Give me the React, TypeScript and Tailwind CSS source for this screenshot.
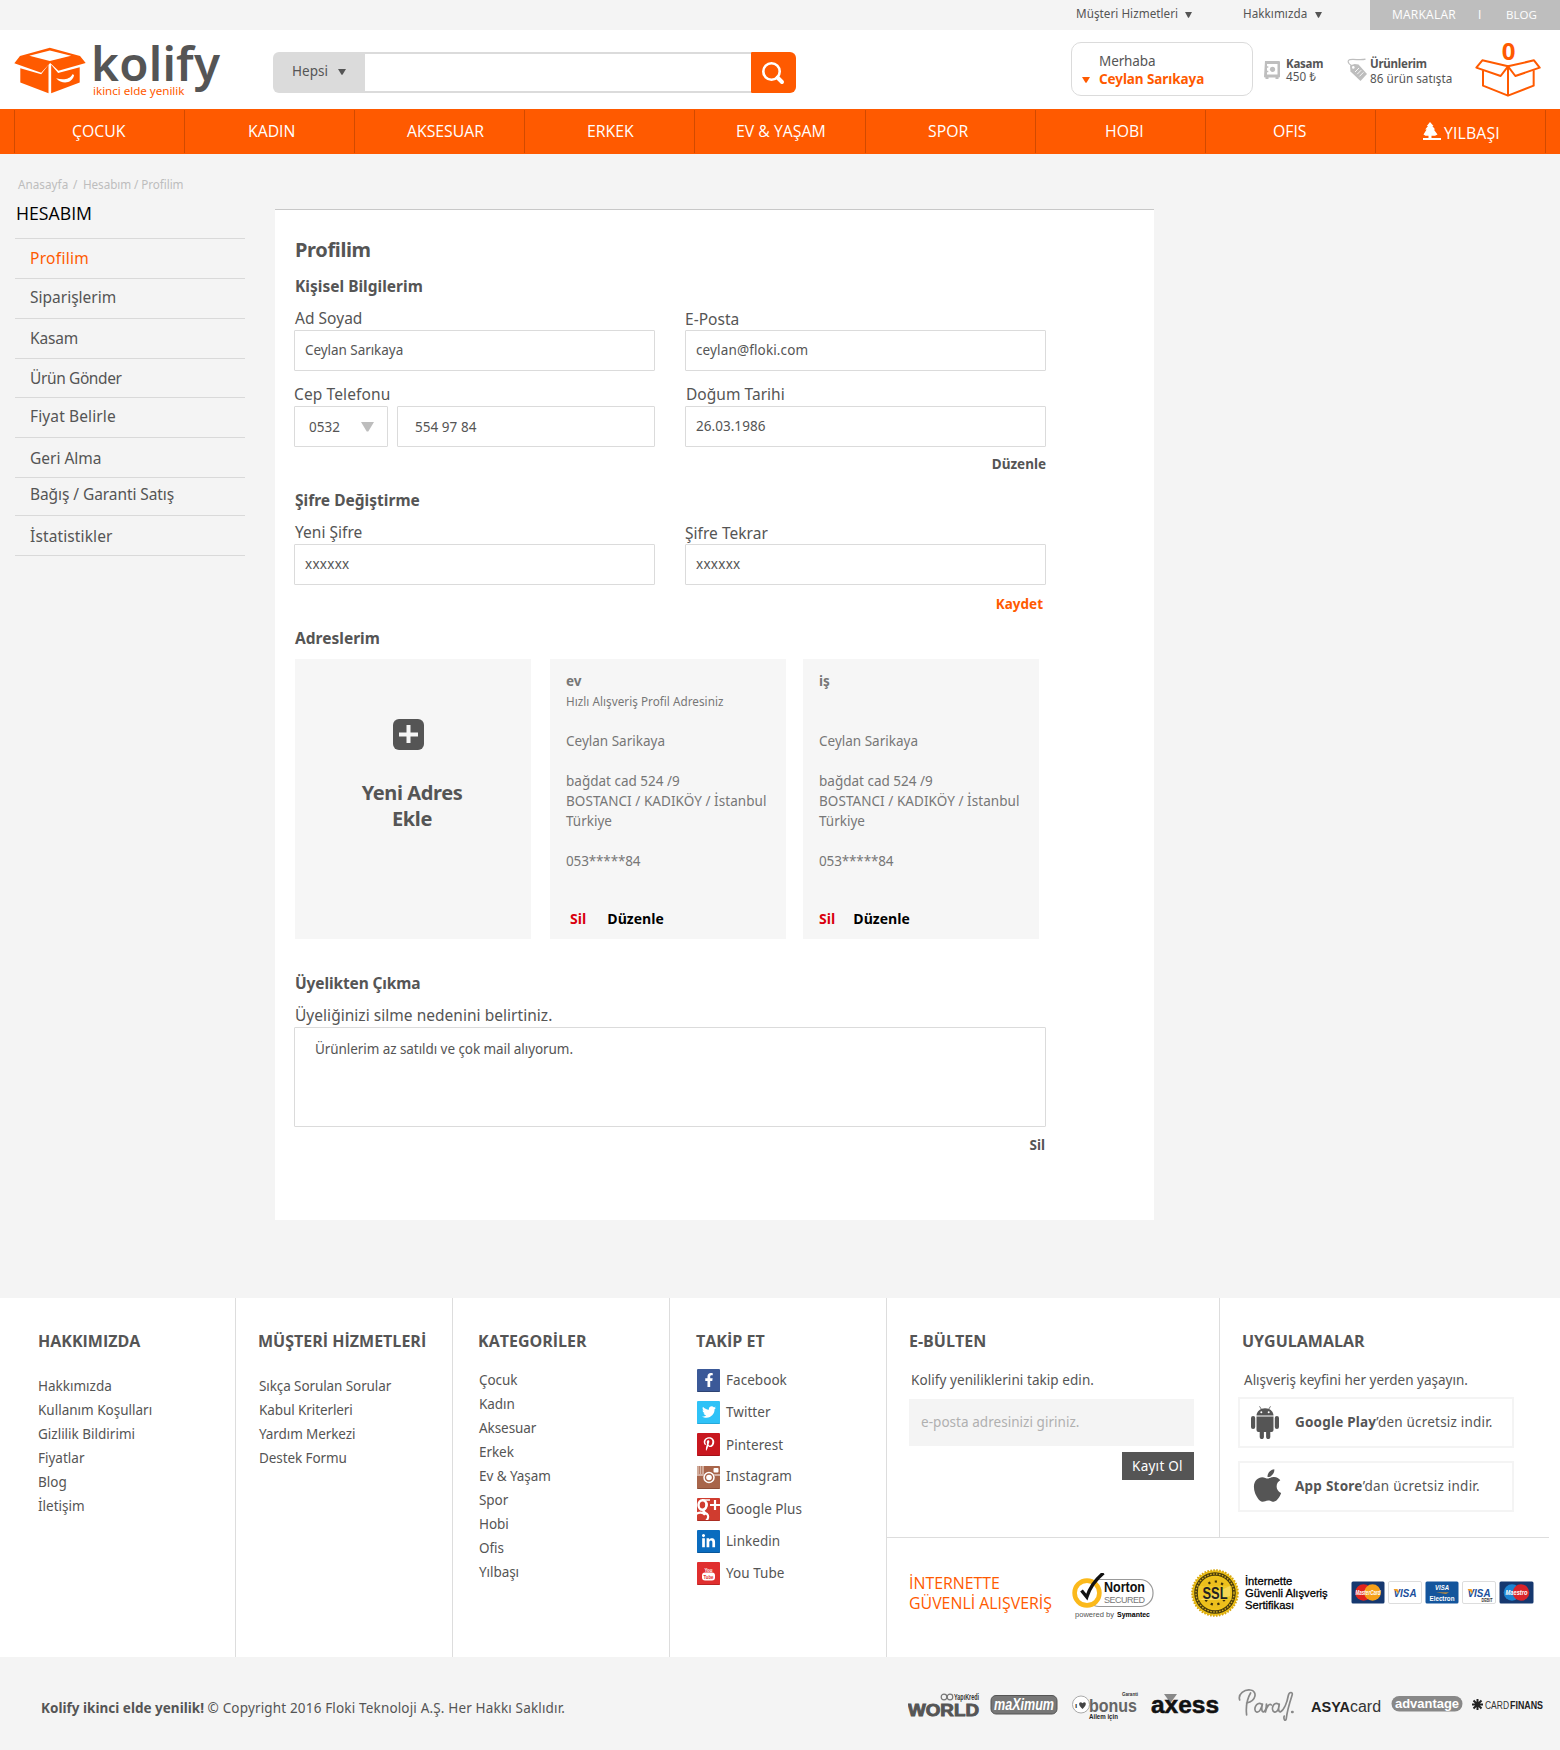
import React from 'react';
import { FaFacebookF, FaTwitter, FaPinterestP, FaLinkedinIn, FaApple } from 'react-icons/fa';

const t12 = "text-[11.7px] tracking-[0.003em]";
const t14 = "text-[13.5px] tracking-[0.003em]";
const t16 = "text-[15.5px] tracking-[0.002em]";
const b16 = "text-[15.5px] font-bold tracking-[0.001em] leading-6";

function Caret({ w, h, className = '' }: { w: number; h: number; className?: string }) {
  return (
    <svg width={w} height={h} viewBox="0 0 10 10" preserveAspectRatio="none" className={className} fill="currentColor">
      <path d="M0 0h10L5.6 9.6h-1.2z" />
    </svg>
  );
}

function LogoBox() {
  return (
    <svg width="72" height="47" viewBox="44 139 217 141">
      <path fill="#ff5a00" d="M45 188 62 166 152 141 243 166 260 187 178 210 153 187 126 216z" />
      <path fill="#fff" d="M90 165 152 149 216 165 152 181z" />
      <path fill="#ff5a00" d="M63 203 126 221 148 192V278L63 246z" />
      <path fill="#ff5a00" d="M156 192 177 217 242 200V246L156 278z" />
      <path fill="#fff" d="M171 233C190 238 212 238 221 220L225 224C220 248 190 254 171 233z" />
    </svg>
  );
}

function BasketIcon() {
  return (
    <svg width="66" height="38" viewBox="1303 178 198 114" fill="none" stroke="#ff5a00" strokeWidth="6" strokeLinejoin="round">
      <path d="M1307 204 1325 182 1402 200 1380 229z" />
      <path d="M1402 200 1480 182 1497 204 1424 229z" />
      <path d="M1327 212V258L1402 288 1479 258V212M1402 200V288" />
    </svg>
  );
}

function SafeIcon() {
  return (
    <svg width="16" height="18" viewBox="0 0 16 18">
      <path fill="#bebebe" d="M1 0h14a1 1 0 0 1 1 1v14.500a1 1 0 0 1-1 1h-.5V18h-3v-1.500h-7V18h-3v-1.500H1a1 1 0 0 1-1-1z" />
      <path fill="#fff" d="M3 3h10.500v10.500H3v-2.200h1.300V9.700H3V6.800h1.300V5.200H3z" />
      <circle cx="8.500" cy="8.300" r="2.600" fill="#bebebe" />
    </svg>
  );
}

function TagIcon() {
  return (
    <svg width="20" height="23" viewBox="0 0 20 23">
      <path d="M18.500 1.200C13 2.600 8 .8 3 1.600 0 2.200.8 5.500 4.500 7.500" fill="none" stroke="#bebebe" strokeWidth="1.200" />
      <path fill="#bebebe" d="M3 7.500 7.500 6l4 .5L20 16l-6.500 7L3.500 13.500z" />
      <circle cx="6.300" cy="9.400" r="1.300" fill="#fff" />
      <path d="m8 14 4-4M10.200 16.200l4-4M12.400 18.400l4-4" stroke="#fff" strokeWidth=".9" />
    </svg>
  );
}

function TreeIcon() {
  return (
    <svg width="18" height="18" viewBox="0 0 18 18" fill="#fff" className="mt-3">
      <path d="M7 0 10.500 4H9.300L12.200 7.600H10.800L14.500 12.500 12 13.800H8.500V16H18v2H0V16H5.500V13.800H2.500L.5 12.500 3.600 7.600H2.200L5 4H3.800z" />
    </svg>
  );
}

const nav = [
  { n: 'ÇOCUK', c: 'w-[170px] pl-[57px]' },
  { n: 'KADIN', c: 'w-[170px] pl-[63px]' },
  { n: 'AKSESUAR', c: 'w-[170px] pl-[52px]' },
  { n: 'ERKEK', c: 'w-[170px] pl-[62px]' },
  { n: 'EV & YAŞAM', c: 'w-[171px] pl-[41px]' },
  { n: 'SPOR', c: 'w-[170px] pl-[62px]' },
  { n: 'HOBI', c: 'w-[170px] pl-[69px]' },
  { n: 'OFIS', c: 'w-[170px] pl-[67px]' },
];

function Header() {
  return (
    <header>
      <div className="flex h-[30px] justify-end">
        <div className={`${t12} flex leading-[27px]`}>
          <span className="w-[101px] whitespace-nowrap">Müşteri Hizmetleri</span>
          <Caret w={7} h={6} className="ml-2 mt-3" />
          <span className="ml-[51px] w-[62px] whitespace-nowrap">Hakkımızda</span>
          <Caret w={7} h={6} className="ml-[10px] mt-3" />
        </div>
        <div className="ml-12 flex w-[190px] bg-[#bebebe] pl-[22px] font-['Open_Sans'] text-[12px] leading-[30px] text-white">
          <span className="w-[86px] tracking-[0.02em]">MARKALAR</span>
          <span className="w-[28px]">I</span>
          <span className="text-[11.5px]">BLOG</span>
        </div>
      </div>
      <div className="flex h-[79px] items-start bg-white pl-[15px]">
        <div className="-ml-px mt-[17px] w-[73px]"><LogoBox /></div>
        <div className="ml-[4px] mt-[9px] w-[182px]">
          <div className="h-[45px] text-[47.5px] font-semibold leading-[48px] tracking-[0.005em]">kolify</div>
          <div className="pl-[2px] text-[11.6px] leading-[13px] tracking-[-0.002em] text-[#ff5a00]">ikinci elde yenilik</div>
        </div>
        <div className="mt-[22px] flex h-[41px]">
          <div className={`${t14} flex w-[92px] rounded-l-[6px] bg-[#dbdbdb] pl-[19px] leading-[39px]`}>
            <span className="w-9">Hepsi</span>
            <Caret w={8} h={6} className="ml-[10px] mt-[17px]" />
          </div>
          <div className="w-[386px] border-y-2 border-[#dbdbdb] bg-white" />
          <div className="w-[45px] rounded-l-[1px] rounded-r-[6px] bg-[#ff5a00] pl-[10px] pt-[9px]">
            <svg width="24" height="24" viewBox="0 0 24 24" fill="none" stroke="#fff">
              <circle cx="10.500" cy="10.500" r="8.200" strokeWidth="2.600" />
              <path d="m16.500 16.500 4.500 4.500" strokeWidth="4" strokeLinecap="round" />
            </svg>
          </div>
        </div>
        <div className="ml-[275px] mt-3 flex h-[54px] w-[182px] rounded-[10px] border border-[#dbdbdb]">
          <Caret w={8} h={6} className="ml-[10px] mt-[34px] text-[#ff5a00]" />
          <div className="ml-[9px] mt-[9px] leading-[18px]">
            <div className="text-[13.5px] tracking-[-0.008em]">Merhaba</div>
            <div className="text-[13.5px] font-bold tracking-[-0.006em] text-[#ff5a00]">Ceylan Sarıkaya</div>
          </div>
        </div>
        <div className="ml-[11px] mt-[31px]"><SafeIcon /></div>
        <div className={`${t12} ml-[6px] mt-[28px] w-[61px] leading-[13px]`}>
          <div className="-mt-px h-[14px] text-[11.5px] font-bold tracking-[-0.02em]">Kasam</div>
          <div className="-mt-px">450 ₺</div>
        </div>
        <div className="mt-7 w-5"><TagIcon /></div>
        <div className={`${t12} ml-[3px] mt-[27px] w-[104px] whitespace-nowrap leading-[14px]`}>
          <div className="text-[11.5px] font-bold tracking-[-0.02em]">Ürünlerim</div>
          <div>86 ürün satışta</div>
        </div>
        <div className="mt-[12px] flex w-[68px] flex-col items-center text-[#ff5a00]">
          <div className="h-[17px] pl-px text-[24px] font-bold leading-[18px]">0</div>
          <BasketIcon />
        </div>
      </div>
      <nav className="flex h-[45px] bg-[#ff5a00] py-px pl-[14px] font-['Open_Sans'] text-[15.8px] leading-[43px] text-white">
        {nav.map((i) => (
          <div key={i.n} className={`${i.c} whitespace-nowrap border-l border-[#d24a00]`}>{i.n}</div>
        ))}
        <div className="flex w-[171px] border-x border-[#d24a00] pl-[47px] leading-[47px]">
          <TreeIcon />
          <span className="ml-[3px] tracking-[0.01em]">YILBAŞI</span>
        </div>
      </nav>
    </header>
  );
}

const side = [
  { n: 'Profilim', c: 'h-[40px] pt-[7px] text-[#ff5a00] tracking-[0.02em]' },
  { n: 'Siparişlerim', c: 'h-[40px] pt-[6px]' },
  { n: 'Kasam', c: 'h-[40px] pt-[7px] tracking-[-0.01em]' },
  { n: 'Ürün Gönder', c: 'h-[39px] pt-[7px] tracking-[-0.025em]' },
  { n: 'Fiyat Belirle', c: 'h-[40px] pt-[6px] tracking-[0.008em]' },
  { n: 'Geri Alma', c: 'h-[40px] pt-[8px]' },
  { n: 'Bağış / Garanti Satış', c: 'h-[38px] pt-[4px] tracking-[-0.005em]' },
  { n: 'İstatistikler', c: 'h-[41px] pt-[8px] border-b tracking-[0.008em]' },
];

function Sidebar() {
  return (
    <aside className="w-[275px] pl-[15px] pt-[22px]">
      <div className={`${t12} flex pl-[3px] leading-4 text-[#bdbdbd]`}>
        <span className="w-[55px]">Anasayfa</span>
        <span className="w-[10px]">/</span>
        <span className="tracking-[-0.006em]">Hesabım / Profilim</span>
      </div>
      <h2 className="ml-px mt-[9px] font-['Open_Sans'] text-[17.7px] leading-6 text-black">HESABIM</h2>
      <ul className="mt-[13px] w-[230px] text-[15.5px]">
        {side.map((s) => (
          <li key={s.n} className={`${s.c} border-t border-[#d9d9d9] pl-[15px] leading-6`}>{s.n}</li>
        ))}
      </ul>
    </aside>
  );
}

function Field({ label, value, labelClass = '', valueClass = 'tracking-[0.003em]' }: { label: string; value: string; labelClass?: string; valueClass?: string }) {
  return (
    <div className="w-[361px]">
      <div className={`${t16} ${labelClass} h-6 leading-6`}>{label}</div>
      <div className={`${valueClass} h-[41px] rounded-[1px] border border-[#dbdbdb] pl-[10px] text-[13.5px] leading-[38px]`}>{value}</div>
    </div>
  );
}

function Address({ title, note, first }: { title: string; note?: string; first?: boolean }) {
  return (
    <div className="h-[280px] w-[236px] whitespace-nowrap bg-[#f6f6f6] pl-4 pt-3 text-[13.5px] leading-5 text-[#777]">
      <div className="font-bold">{title}</div>
      <div className="h-10 text-[11.7px] leading-5 tracking-[0.003em]">{note}</div>
      <div>Ceylan Sarikaya</div>
      <div className="mt-5">bağdat cad 524 /9</div>
      <div className="tracking-[0.004em]">BOSTANCI / KADIKÖY / İstanbul</div>
      <div>Türkiye</div>
      <div className="mt-5 tracking-[-0.01em]">053*****84</div>
      <div className={`${first ? 'gap-[21px] pl-1' : 'gap-[18px]'} mt-[38px] flex font-['Open_Sans'] text-[14px] font-bold text-black`}>
        <span className="text-[#d9000d]">Sil</span>
        <span>Düzenle</span>
      </div>
    </div>
  );
}

function Profile() {
  return (
    <main className="mt-[55px] h-[1011px] w-[879px] border-t border-[#c8c8c8] bg-white pl-[19px] pt-[26px]">
      <h1 className="ml-px text-[20px] font-bold leading-7 tracking-[-0.018em]">Profilim</h1>
      <h3 className={`${b16} ml-px mt-[10px]`}>Kişisel Bilgilerim</h3>
      <div className="mt-2 flex gap-[30px]">
        <Field label="Ad Soyad" value="Ceylan Sarıkaya" labelClass="pl-px" valueClass="tracking-[-0.004em]" />
        <Field label="E-Posta" value="ceylan@floki.com" labelClass="pt-px" valueClass="tracking-[0.01em]" />
      </div>
      <div className="mt-[11px] flex gap-[30px]">
        <div className="w-[361px]">
          <div className="text-[15.5px] leading-6 tracking-[0.008em]">Cep Telefonu</div>
          <div className={`${t14} flex gap-[9px] leading-10`}>
            <div className="flex h-[41px] w-[94px] rounded-[1px] border border-[#dbdbdb] pl-[14px]">
              <span className="w-[52px]">0532</span>
              <Caret w={13} h={10} className="mt-[15px] text-[#bdbdbd]" />
            </div>
            <div className="h-[41px] w-[258px] rounded-[1px] border border-[#dbdbdb] pl-[17px]">554 97 84</div>
          </div>
        </div>
        <Field label="Doğum Tarihi" value="26.03.1986" labelClass="pl-px" />
      </div>
      <div className="mt-[7px] w-[752px] text-right text-[13.5px] font-bold leading-5">Düzenle</div>
      <h3 className={`${b16} ml-px mt-[14px]`}>Şifre Değiştirme</h3>
      <div className="mt-2 flex gap-[30px]">
        <Field label="Yeni Şifre" value="xxxxxx" labelClass="pl-px" valueClass="tracking-[0.02em]" />
        <Field label="Şifre Tekrar" value="xxxxxx" labelClass="pt-px" valueClass="tracking-[0.02em]" />
      </div>
      <div className="mt-[9px] w-[749px] text-right text-[13.5px] font-bold leading-5 text-[#ff5a00]">Kaydet</div>
      <h3 className={`${b16} ml-px mt-[12px]`}>Adreslerim</h3>
      <div className="ml-px mt-[9px] flex">
        <div className="flex h-[280px] w-[236px] flex-col bg-[#f6f6f6] pt-[60px]">
          <svg width="31" height="31" viewBox="0 0 31 31" className="ml-[98px]">
            <rect width="31" height="31" rx="6" fill="#555" />
            <path d="M15.500 6v18M6 15.500h19" stroke="#f6f6f6" strokeWidth="4" />
          </svg>
          <div className="mt-[30px] pr-[2px] text-center text-[20px] font-bold leading-[26px] tracking-[-0.02em]">Yeni Adres<br />Ekle</div>
        </div>
        <div className="ml-[19px]"><Address title="ev" note="Hızlı Alışveriş Profil Adresiniz" first /></div>
        <div className="ml-[17px]"><Address title="iş" /></div>
      </div>
      <h3 className="ml-px mt-8 text-[15.5px] font-bold leading-6 tracking-[-0.008em]">Üyelikten Çıkma</h3>
      <div className={`${t16} ml-px mt-2 leading-6`}>Üyeliğinizi silme nedenini belirtiniz.</div>
      <div className="h-[100px] w-[752px] rounded-[1px] border border-[#dbdbdb] pl-5 pt-[11px] text-[13.5px] leading-5 tracking-[-0.005em]">Ürünlerim az satıldı ve çok mail alıyorum.</div>
      <div className="mt-2 w-[751px] text-right text-[13.5px] font-bold leading-5">Sil</div>
    </main>
  );
}

function Title({ children }: { children: React.ReactNode }) {
  return <h4 className="whitespace-nowrap font-['Open_Sans'] text-[16px] font-bold leading-6">{children}</h4>;
}

function Links({ items, className }: { items: string[]; className: string }) {
  return (
    <ul className={`text-[13.5px] ${className} leading-6`}>
      {items.map((i) => <li key={i}>{i}</li>)}
    </ul>
  );
}

const social = [
  { n: 'Facebook', bg: 'bg-[#3b5998] border-[#2d4373] mt-[16px]', tx: 'leading-[22px]', icon: <FaFacebookF size={14} /> },
  { n: 'Twitter', bg: 'bg-[#2fc2f7] border-[#25a9da]', tx: 'leading-[22px]', icon: <FaTwitter size={14} /> },
  { n: 'Pinterest', bg: 'bg-[#c8171f] border-[#a30f17]', tx: 'leading-[24px]', icon: <FaPinterestP size={14} /> },
  {
    n: 'Instagram', bg: 'bg-[#a8654a] border-[#8a4f39] mt-[10px]', tx: 'leading-[20px]', icon: (
      <svg width="23" height="23" viewBox="0 0 23 23">
        <path d="M1 0v8M3.500 0v8M6 0v8" stroke="#d8b8a8" strokeWidth="1.700" />
        <path d="M0 9h23" stroke="#fff" strokeWidth="1.200" />
        <circle cx="12" cy="11.500" r="6" fill="#a8654a" />
        <circle cx="12" cy="11.500" r="5" fill="none" stroke="#fff" strokeWidth="1.500" />
        <circle cx="12" cy="11.500" r="2.800" fill="#fff" />
        <rect x="16.500" y="2" width="5" height="4.500" rx="1" fill="#fff" />
      </svg>
    ),
  },
  {
    n: 'Google Plus', bg: 'bg-[#d03c2f] border-[#ab2d22]', tx: 'leading-[22px]', icon: (
      <svg width="23" height="23" viewBox="0 0 23 23" fill="none" stroke="#fff">
        <ellipse cx="5.500" cy="7" rx="4" ry="4.800" strokeWidth="2.400" />
        <path d="M5 2h8" strokeWidth="1.300" />
        <path d="M9 4c1.500 3 .5 5.500-2 7.500-2 2 1 3 3 4.500 2 2 1 5-1 7M-1 16c3-2 7-2 9 1" strokeWidth="2.200" />
        <path d="M18 2v10M13 7h10" strokeWidth="2.200" />
      </svg>
    ),
  },
  { n: 'Linkedin', bg: 'bg-[#0a6cbf] border-[#07569a]', tx: 'leading-[22px]', icon: <FaLinkedinIn size={15} /> },
  {
    n: 'You Tube', bg: 'bg-[#e02f2f] border-[#b92323]', tx: 'leading-[22px]', icon: (
      <svg width="23" height="23" viewBox="0 0 23 23" fontFamily="Liberation Sans" fontWeight="700" textAnchor="middle">
        <rect x="5" y="10.500" width="13" height="8" rx="3" fill="#fff" />
        <text x="11.500" y="9.800" fontSize="6" fill="#fff" textLength="8" lengthAdjust="spacingAndGlyphs">You</text>
        <text x="11.500" y="16.700" fontSize="5.500" fill="#e02f2f" textLength="10" lengthAdjust="spacingAndGlyphs">Tube</text>
      </svg>
    ),
  },
];

function AndroidIcon() {
  return (
    <svg width="28" height="33" viewBox="0 0 28 33" fill="#555">
      <path d="M5.500 9.500C5.700 5.500 9 2.200 14 2.200s8.300 3.300 8.500 7.300z" />
      <path d="m8.500.3 2 3.200M19.500.3l-2 3.200" stroke="#555" strokeWidth=".8" />
      <circle cx="10.300" cy="6.200" r="1" fill="#fff" /><circle cx="17.700" cy="6.200" r="1" fill="#fff" />
      <path d="M5.500 10.500h17V24a2 2 0 0 1-2 2h-1.200v5a2.100 2.100 0 0 1-4.200 0v-5h-2.200v5a2.100 2.100 0 0 1-4.200 0v-5H7.500a2 2 0 0 1-2-2z" />
      <rect y="10" width="4.200" height="13" rx="2.100" /><rect x="23.800" y="10" width="4.200" height="13" rx="2.100" />
    </svg>
  );
}

function Norton() {
  return (
    <svg width="84" height="48" viewBox="0 0 84 48" fontFamily="Liberation Sans">
      <rect x="14" y="6.500" width="67" height="27" rx="13" fill="#fff" stroke="#999" strokeWidth="1.200" />
      <circle cx="15" cy="20" r="12.400" fill="#fff" stroke="#fbb91b" strokeWidth="4.600" />
      <path d="m9.500 17.500 5.300 6.500C18 14 23 7 31.500 0" fill="none" stroke="#111" strokeWidth="3.400" />
      <text x="32" y="19" fontSize="14" fontWeight="700" fill="#111" textLength="41" lengthAdjust="spacingAndGlyphs">Norton</text>
      <text x="32" y="29.500" fontSize="9" fill="#777" textLength="41">SECURED</text>
      <text x="3" y="43.500" fontSize="7.500" fill="#555" textLength="39" lengthAdjust="spacingAndGlyphs">powered by</text>
      <text x="45" y="43.500" fontSize="7.500" fontWeight="700" textLength="33" lengthAdjust="spacingAndGlyphs">Symantec</text>
    </svg>
  );
}

function Ssl() {
  return (
    <svg width="48" height="50" viewBox="0 0 48 50">
      <circle cx="24" cy="25" r="22.800" fill="#f0c419" stroke="#d6a50c" strokeWidth="2" strokeDasharray="1.600 1.400" />
      <circle cx="24" cy="25" r="19" fill="none" stroke="#4a3c0c" strokeWidth="3.600" />
      <circle cx="24" cy="25" r="19" fill="none" stroke="#d9b21c" strokeWidth="1.400" strokeDasharray="1.500 1.500" />
      <circle cx="24" cy="25" r="15.500" fill="#ecbf1d" />
      <circle cx="24" cy="25" r="11.500" fill="none" stroke="#3b2f08" strokeWidth="2.200" strokeDasharray="2.200 4.500" />
      <rect x="7.500" y="18" width="33" height="14" fill="#efc727" />
      <path d="M9 32 39 18v10L26 32z" fill="#f8e06a" opacity=".7" />
      <text x="24" y="30.800" fontFamily="Liberation Sans" fontWeight="700" fontSize="16" textAnchor="middle" textLength="25" lengthAdjust="spacingAndGlyphs" fill="#222">SSL</text>
    </svg>
  );
}

function PayCards() {
  return (
    <svg width="184" height="24" viewBox="0 0 184 24" fontFamily="Liberation Sans" fontWeight="700" textAnchor="middle">
      <rect x=".5" y=".5" width="33" height="22" rx="1.500" fill="#16386f" />
      <circle cx="12.500" cy="11.500" r="8.300" fill="#e0231c" /><circle cx="21.500" cy="11.500" r="8.300" fill="#f6a01a" />
      <text x="17" y="14" fontSize="6.500" fontStyle="italic" fill="#fff" textLength="25" lengthAdjust="spacingAndGlyphs">MasterCard</text>
      <rect x="37.500" y=".5" width="33" height="22" rx="1.500" fill="#fff" stroke="#ddd" />
      <text x="54" y="15.500" fontSize="11" fontStyle="italic" fill="#1c4f9c" textLength="23" lengthAdjust="spacingAndGlyphs">VISA</text>
      <path d="m42.500 8 4 0 1.500 5z" fill="#f6a01a" />
      <rect x="74.500" y=".5" width="33" height="22" rx="1.500" fill="#14559c" />
      <text x="91" y="9" fontSize="7.500" fontStyle="italic" fill="#fff" textLength="14" lengthAdjust="spacingAndGlyphs">VISA</text>
      <path d="M85 11.500h13l-3 1.200z" fill="#f6a01a" />
      <text x="91" y="19.500" fontSize="7.500" fill="#fff" textLength="25" lengthAdjust="spacingAndGlyphs">Electron</text>
      <rect x="111.500" y=".5" width="33" height="22" rx="1.500" fill="#fff" stroke="#ddd" />
      <text x="128" y="15.500" fontSize="11" fontStyle="italic" fill="#1c4f9c" textLength="23" lengthAdjust="spacingAndGlyphs">VISA</text>
      <path d="m116.500 8 4 0 1.500 5z" fill="#f6a01a" />
      <text x="136" y="20.500" fontSize="5.500" fill="#333" textLength="11" lengthAdjust="spacingAndGlyphs">DEBIT</text>
      <rect x="148.500" y=".5" width="34" height="22" rx="1.500" fill="#16386f" />
      <circle cx="161" cy="11.500" r="8.300" fill="#1c84d1" /><circle cx="170" cy="11.500" r="8.300" fill="#d8232a" />
      <text x="165.500" y="14" fontSize="6.500" fontStyle="italic" fill="#fff" textLength="22" lengthAdjust="spacingAndGlyphs">Maestro</text>
    </svg>
  );
}

function BankLogos() {
  return (
    <svg width="640" height="44" viewBox="0 0 640 44" fontFamily="Liberation Sans" fontWeight="700">
      <g transform="translate(0 2)">
        <g fill="none" stroke="#777" strokeWidth="1.200"><circle cx="36" cy="9" r="2.800" /><circle cx="42" cy="9" r="2.800" /></g>
        <text x="46" y="12" fontSize="8.500" fill="#333" textLength="25" lengthAdjust="spacingAndGlyphs">YapıKredi</text>
        <text x="0" y="27.500" fontSize="16" fill="#555" stroke="#555" strokeWidth=".9" textLength="71" lengthAdjust="spacingAndGlyphs">WORLD</text>
      </g>
      <rect x="83" y="9.500" width="66" height="18.500" rx="5" fill="#777" stroke="#555" />
      <text x="86" y="24" fontSize="16" fontStyle="italic" fill="#fff" textLength="60" lengthAdjust="spacingAndGlyphs">maXimum</text>
      <circle cx="173" cy="18.500" r="8.500" fill="#fff" stroke="#aaa" />
      <text x="167" y="21.500" fontSize="8" fill="#333">ı</text>
      <path d="M174.500 23c-6-5-2.500-8.500 0-5.700 2.500-2.800 6 .7 0 5.700z" fill="#444" />
      <text x="181" y="25.500" fontSize="19" fill="#666" textLength="48" lengthAdjust="spacingAndGlyphs">bonus</text>
      <text x="214" y="9.500" fontSize="6" fill="#333" textLength="16" lengthAdjust="spacingAndGlyphs">Garanti</text>
      <text x="181" y="33" fontSize="7" fill="#222" textLength="29" lengthAdjust="spacingAndGlyphs">Ailem için</text>
      <path d="M256 8h13l-6.500 9z" fill="#888" />
      <text x="243" y="27" fontSize="23" fill="#111" stroke="#111" strokeWidth=".5" textLength="68" lengthAdjust="spacingAndGlyphs">axess</text>
      <g transform="translate(3 -1) scale(.99 1)" fill="none" stroke="#888" strokeWidth="1.700" strokeLinecap="round" strokeLinejoin="round">
        <path d="M339 30c-1-9 1-17 4-22M332 15c-2-6 5-11 11-10 7 1 6 11-4 13M354 19c-5-3-9 6-5 8 3 1 5-4 6-8-1 4-1 8 1 8 2-1 3-5 3-8 1 2-1 6-1 8 1-5 4-9 6-7M371 19c-5-3-8 6-4 8 3 1 5-4 5-8-1 4-1 8 1 8 4-2 7-10 8-16 1-5 5-4 4-1-2 6-5 15-6 24-1 3-3 0-2-3" />
        <path d="M385 27h.4" strokeWidth="2.600" />
      </g>
      <text x="403" y="26" fontSize="15" fill="#222" textLength="39" lengthAdjust="spacingAndGlyphs">ASYA</text>
      <text x="442" y="26" fontSize="16" fontWeight="400" fill="#333" textLength="31" lengthAdjust="spacingAndGlyphs">card</text>
      <rect x="483.500" y="10" width="71" height="15.500" rx="7.700" fill="#888" />
      <text x="487" y="22" fontSize="13" fill="#fff" textLength="64" lengthAdjust="spacingAndGlyphs">advantage</text>
      <path d="M569.500 13v11M564 18.500h11M565.500 14.500l8 8M573.500 14.500l-8 8" stroke="#222" strokeWidth="2" />
      <text x="577" y="22.500" fontSize="10" fontWeight="400" fill="#333" textLength="24" lengthAdjust="spacingAndGlyphs">CARD</text>
      <text x="602" y="22.500" fontSize="11" fill="#222" textLength="33" lengthAdjust="spacingAndGlyphs">FINANS</text>
    </svg>
  );
}

function Footer() {
  return (
    <footer className="mt-[78px]">
      <div className="flex h-[359px] bg-white">
        <div className="w-[235px] pl-[38px] pt-[31px]">
          <Title>HAKKIMIZDA</Title>
          <Links className="mt-[21px]" items={['Hakkımızda', 'Kullanım Koşulları', 'Gizlilik Bildirimi', 'Fiyatlar', 'Blog', 'İletişim']} />
        </div>
        <div className="w-[217px] border-l border-[#ddd] pl-[22px] pt-[31px]">
          <Title>MÜŞTERİ HİZMETLERİ</Title>
          <Links className="mt-[21px] pl-px tracking-[-0.007em]" items={['Sıkça Sorulan Sorular', 'Kabul Kriterleri', 'Yardım Merkezi', 'Destek Formu']} />
        </div>
        <div className="w-[217px] border-l border-[#ddd] pl-[25px] pt-[31px]">
          <Title>KATEGORİLER</Title>
          <Links className="mt-[15px] pl-px tracking-[-0.005em]" items={['Çocuk', 'Kadın', 'Aksesuar', 'Erkek', 'Ev & Yaşam', 'Spor', 'Hobi', 'Ofis', 'Yılbaşı']} />
        </div>
        <div className="w-[217px] border-l border-[#ddd] pl-[26px] pt-[31px]">
          <Title>TAKİP ET</Title>
          <ul className="pl-px">
            {social.map((s, i) => (
              <li key={s.n} className="flex">
                <span className={`${s.bg} ${i > 0 && s.n !== 'Instagram' ? 'mt-[9px]' : ''} flex h-[23px] w-[23px] items-center justify-center overflow-hidden rounded-[1px] border-b text-white`}>{s.icon}</span>
                <span className={`${s.tx} ${i === 0 ? 'mt-[16px]' : i === 3 ? 'mt-[10px]' : 'mt-[9px]'} ${t14} ml-[6px] h-[23px]`}>{s.n}</span>
              </li>
            ))}
          </ul>
        </div>
        <div className="w-[674px] border-l border-[#ddd]">
          <div className="flex h-[240px] w-[662px] border-b border-[#ddd]">
            <div className="w-[332px] pl-[22px] pt-[31px]">
              <Title>E-BÜLTEN</Title>
              <div className="ml-[2px] mt-[15px] text-[13.5px] leading-6 tracking-[0.005em]">Kolify yeniliklerini takip edin.</div>
              <div className={`${t14} mt-[7px] h-[47px] w-[285px] bg-[#f4f4f4] pl-3 leading-[46px] text-[#b0b0b0]`}>e-posta adresinizi giriniz.</div>
              <div className="ml-[213px] mt-[6px] h-7 w-[72px] bg-[#555] pl-[10px] text-[13.5px] leading-7 tracking-[0.02em] text-white">Kayıt Ol</div>
            </div>
            <div className="w-[330px] border-l border-[#ddd] pt-[31px]">
              <div className="pl-[22px]">
                <Title>UYGULAMALAR</Title>
                <div className="ml-[2px] mt-[15px] text-[13.5px] leading-6">Alışveriş keyfini her yerden yaşayın.</div>
              </div>
              <div className="ml-[18px] mt-[5px] flex h-[51px] w-[276px] border-2 border-[#f4f4f4] pl-[11px]">
                <div className="w-[44px] pt-[7px]"><AndroidIcon /></div>
                <div className="text-[13.5px] leading-[46px] tracking-[0.015em]"><b>Google Play</b>’den ücretsiz indir.</div>
              </div>
              <div className="ml-[18px] mt-[13px] flex h-[51px] w-[276px] border-2 border-[#f4f4f4] pl-[11px]">
                <div className="w-[44px] pl-px pt-[4px]"><FaApple size={37} className="-ml-[3px]" /></div>
                <div className="text-[13.5px] leading-[46px] tracking-[0.018em]"><b>App Store</b>’dan ücretsiz indir.</div>
              </div>
            </div>
          </div>
          <div className="flex pl-[22px]">
            <div className="mt-[35px] w-[162px] font-['Open_Sans'] text-[15.9px] leading-5 text-[#ff5a00]">İNTERNETTE<br />GÜVENLİ ALIŞVERİŞ</div>
            <div className="ml-px mt-[35px] w-[119px]"><Norton /></div>
            <div className="mt-[30px] w-[54px]"><Ssl /></div>
            <div className="mt-[37px] w-[106px] whitespace-nowrap font-['Liberation_Sans'] text-[11.2px] leading-[12px] text-black [-webkit-text-stroke:0.3px_black]">İnternette<br />Güvenli Alışveriş<br />Sertifikası</div>
            <div className="mt-[43px]"><PayCards /></div>
          </div>
        </div>
      </div>
      <div className="flex h-[93px]">
        <div className="w-[866px] pl-[41px] pt-[41px] text-[13.5px] leading-5 tracking-[0.006em]"><b className="tracking-[0.001em]">Kolify ikinci elde yenilik!</b> <span className="tracking-[0.012em]">© Copyright 2016 Floki Teknoloji A.Ş. Her Hakkı Saklıdır.</span></div>
        <div className="ml-[42px] pt-[29px]"><BankLogos /></div>
      </div>
    </footer>
  );
}

export default function App() {
  return (
    <div className="h-[1750px] w-[1560px] overflow-hidden bg-[#f4f4f4] font-['Noto_Sans',sans-serif] text-[#555]">
      <Header />
      <div className="flex">
        <Sidebar />
        <Profile />
      </div>
      <Footer />
    </div>
  );
}
